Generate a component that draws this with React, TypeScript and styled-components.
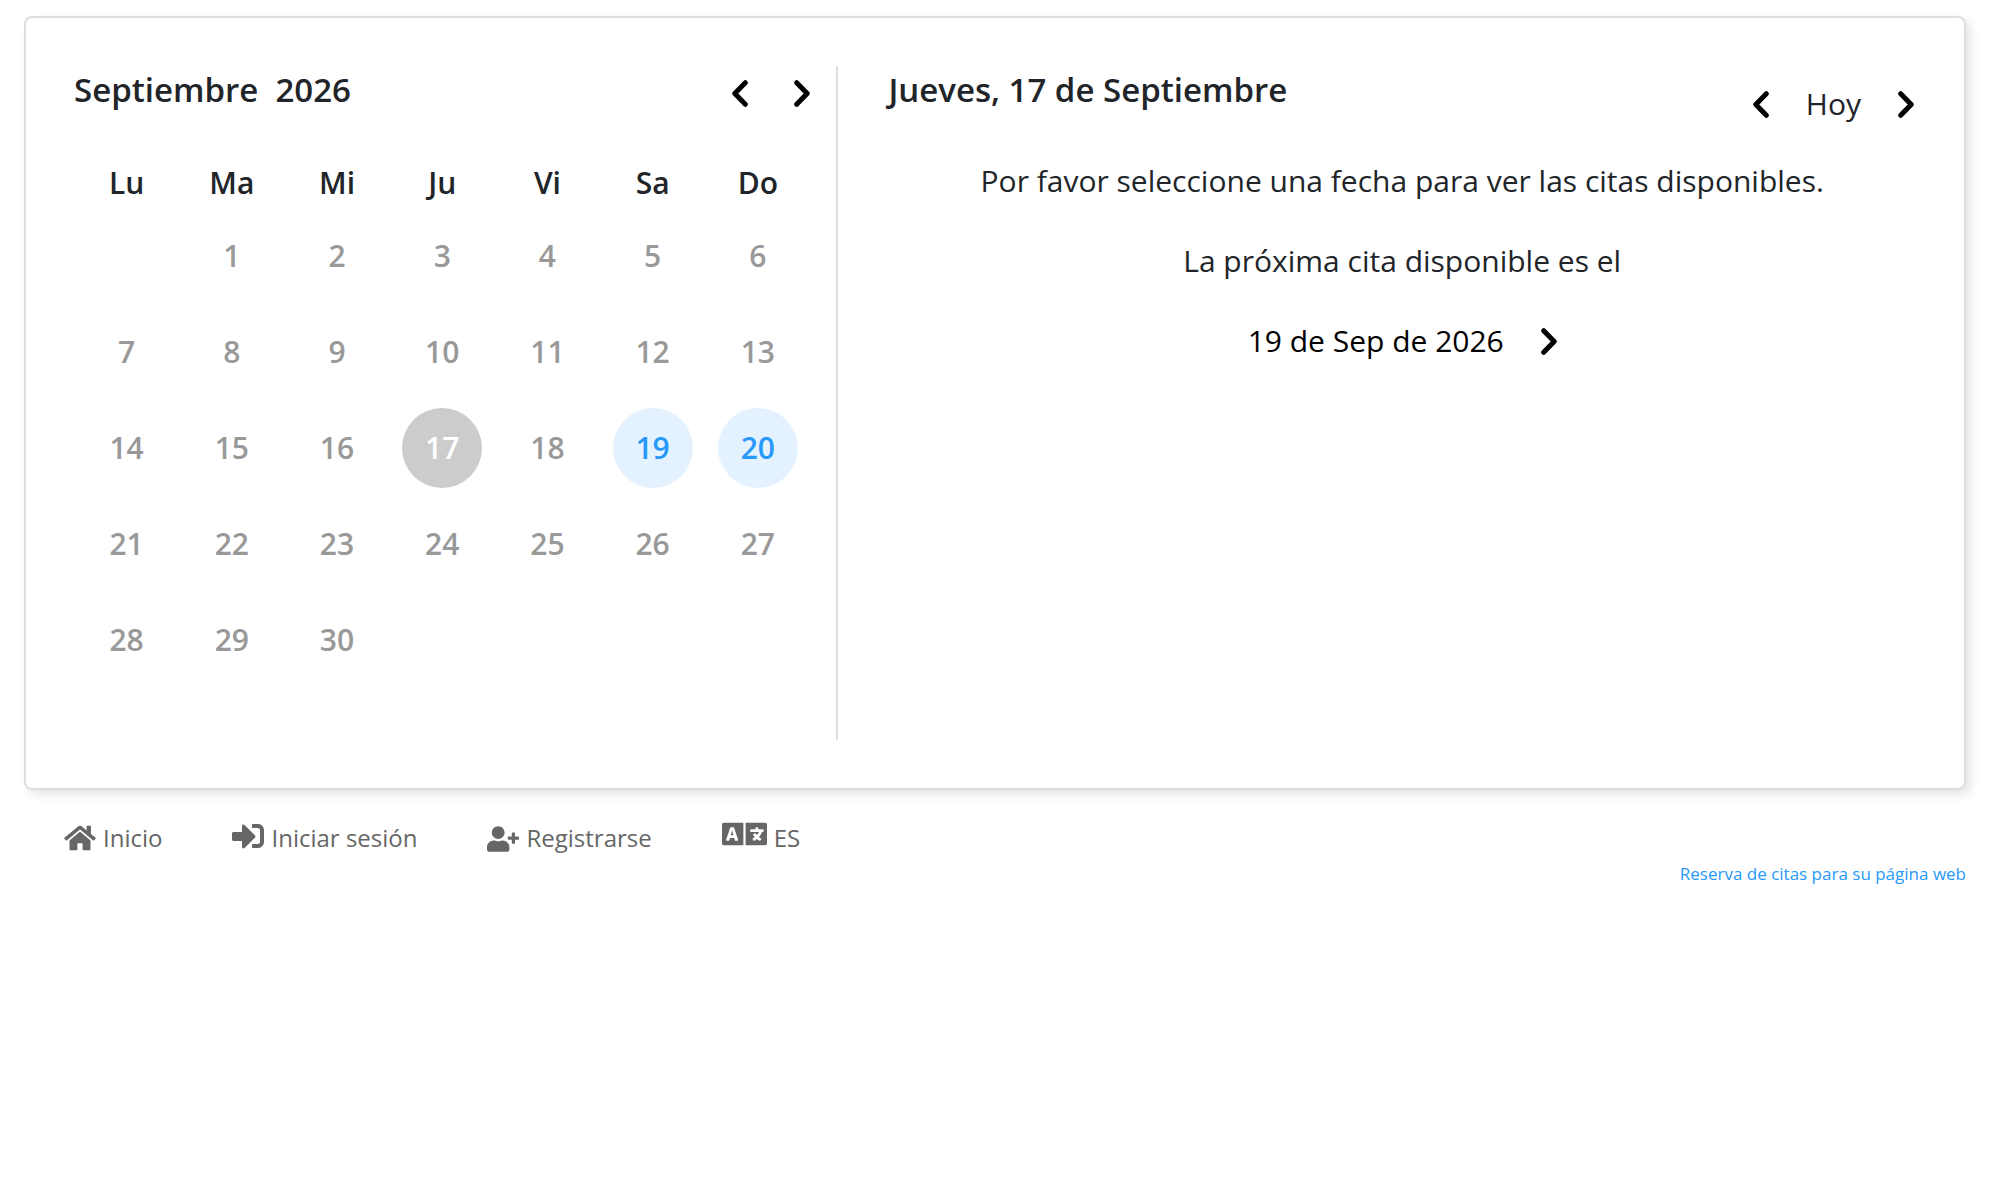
import React from "react";
import styled, { createGlobalStyle } from "styled-components";
import { FaHome, FaSignInAlt, FaUserPlus, FaLanguage } from "react-icons/fa";

const GlobalStyle = createGlobalStyle`
  *, *::before, *::after { box-sizing: border-box; }
  body {
    margin: 0;
    background: #fff;
    color: #212529;
    font-family: "Segoe UI", "Open Sans", "Noto Sans", sans-serif;
    font-size: 30px;
    line-height: 48px;
  }
`;

const Page = styled.div`
  padding: 16px 24px;
`;

const Card = styled.main`
  display: grid;
  grid-template-columns: 41.5% 1fr;
  padding: 48px;
  border: 2px solid #dedede;
  border-radius: 8px;
  box-shadow: 5px 5px 10px rgba(0, 0, 0, 0.1);
`;

const Panel = styled.section`
  min-width: 0;
  min-height: 674px;
`;

const MonthPanel = styled(Panel)`
  padding-right: 26px;
  border-right: 2px solid #dedede;
`;

const DayPanel = styled(Panel)`
  padding-left: 50px;
`;

const PanelHead = styled.header`
  display: flex;
  justify-content: space-between;
  align-items: flex-start;
  height: 91px;
`;

const Title = styled.h2`
  margin: 0;
  font-size: 33px;
  font-weight: 600;
  line-height: 48px;
  white-space: pre;
`;

const MonthNav = styled.div`
  display: flex;
  gap: 46px;
  padding-top: 14px;
`;

const DayNav = styled.div`
  display: flex;
  align-items: center;
  gap: 37px;
  padding: 14px 2px 0 0;
`;

const PlainButton = styled.button`
  display: inline-flex;
  align-items: center;
  justify-content: center;
  padding: 0;
  border: 0;
  background: none;
  color: #000;
  font: inherit;
  cursor: pointer;
`;

const TodayButton = styled(PlainButton)`
  color: #212529;
`;

const Calendar = styled.table`
  width: 100%;
  table-layout: fixed;
  border-collapse: collapse;
  text-align: center;
`;

const Weekday = styled.th`
  height: 51px;
  padding: 0;
  font-weight: 600;
`;

const DayCell = styled.td`
  height: 96px;
  padding: 0;
`;

const Day = styled.button<{ $state: "off" | "today" | "free" }>`
  width: 80px;
  height: 80px;
  padding: 0;
  border: 0;
  border-radius: 50%;
  font: inherit;
  font-weight: 600;
  background: ${(p) => ({ off: "none", today: "#ccc", free: "#e4f2ff" })[p.$state]};
  color: ${(p) => ({ off: "#999", today: "#fff", free: "#2699fb" })[p.$state]};
`;

const Message = styled.p`
  margin: 0 0 32px;
  text-align: center;
`;

const NextDate = styled(PlainButton)`
  display: flex;
  gap: 37px;
  margin: 0 auto;
`;

const Footer = styled.footer`
  display: flex;
  flex-direction: column;
`;

const Links = styled.nav`
  display: flex;
  gap: 70px;
  padding: 26px 40px 0;
`;

const FooterLink = styled.a<{ $width: number; $height: number }>`
  display: flex;
  align-items: flex-end;
  gap: 7px;
  color: #666;
  font-size: 24px;
  line-height: 36px;
  text-decoration: none;

  svg {
    width: ${(p) => p.$width}px;
    height: ${(p) => p.$height}px;
    margin-bottom: 4px;
  }
`;

const Credit = styled.a`
  align-self: flex-end;
  color: #2699fb;
  font-size: 17px;
  line-height: 36px;
  text-decoration: none;
`;

const Chevron = ({ back = false }: { back?: boolean }) => (
  <svg width="16" height="27" viewBox="0 0 16 27" fill="none" stroke="currentColor" strokeWidth="5" strokeLinecap="round" strokeLinejoin="round" aria-hidden="true">
    <path d={back ? "M13.3 2.7 2.8 13.5l10.5 10.8" : "M2.7 2.7l10.5 10.8L2.7 24.3"} />
  </svg>
);

const weekdays = ["Lu", "Ma", "Mi", "Ju", "Vi", "Sa", "Do"];
const weeks = [0, 1, 2, 3, 4].map((w) => weekdays.map((_, d) => w * 7 + d));
const stateOf = (day: number) => (day === 17 ? "today" : day === 19 || day === 20 ? "free" : "off");

export default function App() {
  return (
    <Page>
      <GlobalStyle />
      <Card>
        <MonthPanel>
          <PanelHead>
            <Title>{"Septiembre  2026"}</Title>
            <MonthNav>
              <PlainButton aria-label="Mes anterior"><Chevron back /></PlainButton>
              <PlainButton aria-label="Mes siguiente"><Chevron /></PlainButton>
            </MonthNav>
          </PanelHead>
          <Calendar>
            <thead>
              <tr>{weekdays.map((d) => <Weekday key={d} scope="col">{d}</Weekday>)}</tr>
            </thead>
            <tbody>
              {weeks.map((week) => (
                <tr key={week[0]}>
                  {week.map((day) => (
                    <DayCell key={day}>
                      {day > 0 && day <= 30 && <Day $state={stateOf(day)}>{day}</Day>}
                    </DayCell>
                  ))}
                </tr>
              ))}
            </tbody>
          </Calendar>
        </MonthPanel>
        <DayPanel>
          <PanelHead>
            <Title>Jueves, 17 de Septiembre</Title>
            <DayNav>
              <PlainButton aria-label="Día anterior"><Chevron back /></PlainButton>
              <TodayButton>Hoy</TodayButton>
              <PlainButton aria-label="Día siguiente"><Chevron /></PlainButton>
            </DayNav>
          </PanelHead>
          <Message>Por favor seleccione una fecha para ver las citas disponibles.</Message>
          <Message>La próxima cita disponible es el</Message>
          <NextDate>19 de Sep de 2026 <Chevron /></NextDate>
        </DayPanel>
      </Card>
      <Footer>
        <Links>
          <FooterLink href="#inicio" $width={32} $height={28}><FaHome />Inicio</FooterLink>
          <FooterLink href="#sesion" $width={32} $height={32}><FaSignInAlt />Iniciar sesión</FooterLink>
          <FooterLink href="#registro" $width={32} $height={26}><FaUserPlus />Registrarse</FooterLink>
          <FooterLink href="#idioma" $width={45} $height={36}><FaLanguage />ES</FooterLink>
        </Links>
        <Credit href="#reserva">Reserva de citas para su página web</Credit>
      </Footer>
    </Page>
  );
}
